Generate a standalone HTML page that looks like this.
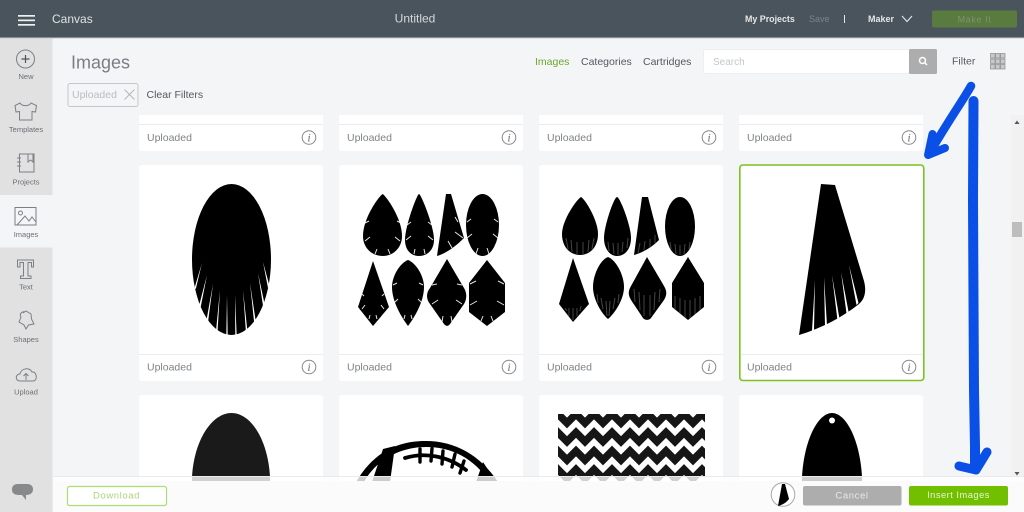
<!DOCTYPE html>
<html><head><meta charset="utf-8">
<style>
html,body{margin:0;padding:0;width:1024px;height:512px;overflow:hidden;background:#f4f5f7}
svg{display:block}
text{font-family:"Liberation Sans",sans-serif}
.s{font-family:"Liberation Serif",serif}
</style></head>
<body>
<svg width="1024" height="512" viewBox="0 0 1024 512" xmlns="http://www.w3.org/2000/svg">
<defs>
<clipPath id="chev"><rect x="558" y="414" width="147" height="68"/></clipPath>
<polyline id="zig" fill="none" stroke="#161616" stroke-width="7.6" points="540,414 549,423 558,414 567,423 576,414 585,423 594,414 603,423 612,414 621,423 630,414 639,423 648,414 657,423 666,414 675,423 684,414 693,423 702,414 711,423"/>
</defs>
<rect width="1024" height="512" fill="#f4f5f7"/>

<!-- cards -->
<g fill="#fff">
<rect x="139" y="110" width="184" height="41" rx="3"/><rect x="339" y="110" width="184" height="41" rx="3"/><rect x="539" y="110" width="184" height="41" rx="3"/><rect x="739" y="110" width="184" height="41" rx="3"/>
<rect x="139" y="165" width="184" height="216" rx="3"/><rect x="339" y="165" width="184" height="216" rx="3"/><rect x="539" y="165" width="184" height="216" rx="3"/>
<rect x="139" y="395" width="184" height="90" rx="3"/><rect x="339" y="395" width="184" height="90" rx="3"/><rect x="539" y="395" width="184" height="90" rx="3"/><rect x="739" y="395" width="184" height="90" rx="3"/>
</g>
<rect x="739.8" y="165" width="184" height="215.5" rx="3" fill="#fff" stroke="#7cc220" stroke-width="1.6"/>
<g fill="#ececec">
<rect x="139" y="124" width="184" height="1"/><rect x="339" y="124" width="184" height="1"/><rect x="539" y="124" width="184" height="1"/><rect x="739" y="124" width="184" height="1"/>
<rect x="139" y="354" width="184" height="1"/><rect x="339" y="354" width="184" height="1"/><rect x="539" y="354" width="184" height="1"/><rect x="741" y="354" width="182" height="1"/>
</g>
<g font-size="10.500" fill="#7f8386">
<text x="147" y="141">Uploaded</text><text x="347" y="141">Uploaded</text><text x="547" y="141">Uploaded</text><text x="747" y="141">Uploaded</text>
<text x="147" y="370.500">Uploaded</text><text x="347" y="370.500">Uploaded</text><text x="547" y="370.500">Uploaded</text><text x="747" y="370.500">Uploaded</text>
</g>
<g fill="none" stroke="#85878a" stroke-width="1">
<circle cx="309" cy="137.500" r="6.800"/><circle cx="509" cy="137.500" r="6.800"/><circle cx="709" cy="137.500" r="6.800"/><circle cx="909" cy="137.500" r="6.800"/>
<circle cx="309" cy="367" r="6.800"/><circle cx="509" cy="367" r="6.800"/><circle cx="709" cy="367" r="6.800"/><circle cx="909" cy="367" r="6.800"/>
</g>
<g font-size="12" fill="#6f7275" font-style="italic" text-anchor="middle">
<text class="s" x="309" y="141.500">i</text><text class="s" x="509" y="141.500">i</text><text class="s" x="709" y="141.500">i</text><text class="s" x="909" y="141.500">i</text>
<text class="s" x="309" y="371">i</text><text class="s" x="509" y="371">i</text><text class="s" x="709" y="371">i</text><text class="s" x="909" y="371">i</text>
</g>

<!-- Card 1 oval -->
<ellipse cx="231.500" cy="259.500" rx="39.500" ry="75.500" fill="#000"/>
<g fill="#fff">
<path d="M202 263L194.500 288L195.800 289Z"/><path d="M207 275L199 306L200.500 308Z"/><path d="M213 284L206.500 320L208 322Z"/><path d="M220 290L216 331L217.500 332Z"/><path d="M227 295L226.300 336L227.700 336Z"/><path d="M235 295L235.300 336L236.700 336Z"/><path d="M243 290L246 333L247.500 332Z"/><path d="M250 283L254.500 326L256 323Z"/><path d="M258 273L263.500 309L265 306Z"/><path d="M263 262L268 288L269.500 286Z"/>
</g>

<!-- Card 2 shapes -->
<g fill="#000">
<path d="M382.700 194C386 196 402 218 402 236C402 248 393 256 382.700 256C372 256 363 248 363 236C363 218 379 196 382.700 194Z"/>
<path d="M419 194C421 194 434 226 434 240C434 250 427 256 419 256C411 256 405 250 405 240C405 226 417 194 419 194Z"/>
<path d="M446 194H451L464 238C456 246 447 253 437 256Z"/>
<ellipse cx="482.500" cy="225" rx="16.500" ry="31"/>
<path d="M373 261L389 307L373 326L358 307Z"/>
<path d="M408 260C416 263 424 276 424 287C424 302 414 318 408 326C402 318 392 302 392 287C392 276 400 263 408 260Z"/>
<path d="M447 259L464 288C467 293 467 299 464 304L450 324C448 326.500 446 326.500 444 324L430 304C426 299 426 293 430 288Z"/>
<path d="M487 260L505 283V312L487 326L469 312V283Z"/>
</g>
<g stroke="#fff" stroke-width="1" fill="none" opacity=".9">
<path d="M365 223L369 221M401 223L397 221M365 241L370 237M400 241L395 237M375 254L377 249M390 254L388 249"/>
<path d="M407 225L411 222M432 225L428 222M406 240L411 236M433 240L428 236M414 254L415 249M425 254L424 249"/>
<path d="M455 217L458 222M455 232L463 238M448 241L452 248"/>
<path d="M467 222L471 219M498 222L494 219M467 238L472 234M498 238L493 234M476 254L478 248M489 254L487 248"/>
<path d="M362 294L364 296M384 294L382 296M362 309L365 305M384 309L381 305M369 319L370 315M377 319L376 315"/>
<path d="M393 285L397 283M423 285L419 283M394 303L398 299M422 303L418 299M404 319L405 315M412 319L411 315"/>
<path d="M432 285L437 284M462 285L457 284M432 304L438 300M462 304L456 300M442 322L443 316M452 322L451 316"/>
<path d="M470 284L476 281M504 284L498 281M470 305L477 301M504 305L497 301M481 321L483 316M493 321L491 316"/>
</g>

<!-- Card 3 shapes -->
<g fill="#000">
<path d="M581 197C585 199 598 220 598 234C598 247 590 255 580 255C570 255 562 247 562 234C562 220 577 199 581 197Z"/>
<path d="M617 197C620 197 631 226 631 238C631 249 625 256 617 256C610 256 604 249 604 238C604 226 614 197 617 197Z"/>
<path d="M642 197H648L659 240C652 247 644 252 634 255Z"/>
<ellipse cx="680" cy="226.500" rx="15" ry="29.500"/>
<path d="M573 258L589 304L573 322L559 304Z"/>
<path d="M608 257C616 260 624 275 624 287C624 300 614 314 608 319C602 314 593 300 593 287C593 275 600 260 608 257Z"/>
<path d="M647 257L664 286C667 291 667 295 664 300L651 318C649 320.500 645 320.500 643 318L631 300C628 295 628 291 631 286Z"/>
<path d="M688 257L704 283V307L688 320L672 307V283Z"/>
</g>
<g stroke="#8a8a8a" stroke-width="1" fill="none" opacity=".5">
<path d="M566 238L568 249M571 240L572 252M577 242L577 254M583 242L583 254M589 240L588 252M594 238L592 249"/>
<path d="M608 242L609 251M613 243L614 254M618 243L618 255M623 242L622 252M628 238L627 248"/>
<path d="M640 243L638 253M645 241L644 250M650 239L650 248M655 235L655 243"/>
<path d="M670 242L671 249M675 244L676 254M680 245L680 255M685 244L684 254M690 242L689 249"/>
<path d="M565 308L567 311M569 308L569 316M573 308L573 320M577 308L577 316M581 306L580 311"/>
<path d="M597 294L598 303M601 298L603 309M606 301L607 316M610 301L609 316M615 298L613 309M619 294L618 303"/>
<path d="M634 289L635 302M639 292L640 310M644 295L644 316M650 295L650 316M655 292L654 310M660 289L659 302"/>
<path d="M675 296V310M680 298V314M685 300V318M690 300V318M695 298V314M700 296V310"/>
</g>

<!-- Card 4 selected shape -->
<path d="M821 184L835 185L864 281C866 289 866 298 859 304C841 318 822 328 799 335Z" fill="#000"/>
<g fill="#fff">
<path d="M815 280L812 331L814 330Z"/><path d="M824 277L825 326.500L827 325.500Z"/><path d="M832 275L837.500 320.500L839.500 319Z"/><path d="M841 272L846.500 313.500L848.500 311.500Z"/><path d="M849 265L856.500 305L858.500 303Z"/>
</g>

<!-- Row 3 -->
<path d="M192 482V477C194 440 212 413 231.500 413C251 413 268 440 270 477V482Z" fill="#1a1a1a"/>
<path d="M356 482C375 450 400 441 426 441C455 441 480 455 498 482Z" fill="#000"/>
<path d="M364 482C376 460 400 447 426 447C452 447 473 458 490 482Z" fill="#fff"/>
<path d="M383 449L372 482H390L395 446Z" fill="#000"/>
<path d="M483 462L476 482H496Z" fill="#000"/>
<g fill="none" stroke="#000" stroke-linecap="round">
<path d="M405 458C425 452 448 456 466 470" stroke-width="3.800"/>
<path d="M420 449L420 462M432 448.500L431 461M443 451L442 464M455 454L452 467M464 461L460 473" stroke-width="3.400"/>
</g>
<g clip-path="url(#chev)">
<use href="#zig"/><use href="#zig" y="18.500"/><use href="#zig" y="37"/><use href="#zig" y="55.500"/>
</g>
<path d="M802 482V477C804 440 818 413 832 413C846 413 860 440 862 477V482Z" fill="#000"/>
<circle cx="832" cy="420.500" r="3" fill="#fff"/>

<!-- Cover above clipped cards -->
<rect x="53" y="38" width="958" height="77" fill="#f4f5f7"/>

<!-- scrollbar -->
<rect x="1011" y="115" width="13" height="361" fill="#f1f1f1"/>
<rect x="1012" y="222" width="10" height="15" fill="#bdbdbd"/>
<path d="M1014.500 124L1017 120.500L1019.500 124Z" fill="#555"/>
<path d="M1014.500 472L1017 475.500L1019.500 472Z" fill="#555"/>

<!-- Sidebar -->
<rect x="0" y="38" width="52.500" height="474" fill="#e1e1e2"/>
<rect x="0" y="195" width="52.500" height="52.500" fill="#f4f5f7"/>
<g fill="none" stroke="#7b8085" stroke-width="1">
<circle cx="25.500" cy="59" r="9"/>
<path d="M25.500 55V63M21.500 59H29.500" stroke="#50555a" stroke-width="1.200"/>
<path d="M20 103L15 105.500L16 112L19.500 111.500V120H32V111.500L35.500 112L36.500 105.500L31 103C29 106.500 22 106.500 20 103Z"/>
<path d="M19.500 154H34V172H19.500V154ZM21 158H17M21 162H17M21 166H17M28 154V162L30.500 160L33 162V154"/>
<rect x="15" y="207.500" width="21" height="17.500"/>
<circle cx="20.500" cy="213" r="2"/>
<path d="M17 225L25 216L29 221L32 217L36 222"/>
<path d="M17.500 260H33.500V267H31.500V262.500H28V276H31V278.500H20.500V276H23.500V262.500H20V267H17.500Z"/>
<path d="M23 313L26 311L31 314L31.500 319L34 324L28.500 325L26 329L24 325L19 322L21 317C19 314 22 311 25 312"/>
<path d="M20 381C15 381 15 374 20 374C21 368 30 367 32 372C37 371 38 381 33 381Z"/>
<path d="M26 380V374M23.500 376L26 373.500L28.500 376"/>
</g>
<path d="M18 484C13 484 12 487 12 489.500C12 493 14 495 19 495H22L26 500V495C30 495 33 493 33 489.500C33 486 31 484 27 484Z" fill="#88898b"/>
<g font-size="7.500" fill="#6a6f73" text-anchor="middle">
<text x="26" y="79">New</text><text x="26" y="132">Templates</text><text x="26" y="184.500">Projects</text><text x="26" y="237">Images</text><text x="26" y="289.500">Text</text><text x="26" y="342">Shapes</text><text x="26" y="394.500">Upload</text>
</g>

<!-- Header -->
<rect x="0" y="0" width="1024" height="37.500" fill="#4a545c"/>
<rect x="0" y="37.500" width="1024" height="1" fill="#c5cbce"/>
<g fill="#eef0f1"><rect x="18" y="15" width="17" height="1.700"/><rect x="18" y="19.500" width="17" height="1.700"/><rect x="18" y="24" width="17" height="1.700"/></g>
<text x="52" y="23" font-size="12" fill="#dfe3e5">Canvas</text>
<text x="415" y="22.500" font-size="12" fill="#d5d9dc" text-anchor="middle">Untitled</text>
<text x="745" y="22" font-size="8.900" font-weight="bold" fill="#e4e7e9">My Projects</text>
<text x="809" y="22" font-size="9" fill="#7a8389">Save</text>
<rect x="844" y="15" width="1" height="8" fill="#e4e7e9"/>
<text x="868" y="22" font-size="9" font-weight="bold" fill="#e4e7e9">Maker</text>
<path d="M902 16L907 21.500L912 16" fill="none" stroke="#dfe3e5" stroke-width="1.200"/>
<rect x="932" y="10.500" width="85" height="17" rx="2" fill="#5a7b3f"/>
<text x="974.500" y="22.500" font-size="9" fill="#7f9270" text-anchor="middle" letter-spacing=".6">Make It</text>

<!-- Toolbar -->
<text x="71" y="68.500" font-size="18" fill="#7a7e82">Images</text>
<text x="535" y="65" font-size="10.500" fill="#6ca82c">Images</text>
<text x="581" y="65" font-size="10.500" fill="#54595d">Categories</text>
<text x="643" y="65" font-size="10.500" fill="#54595d">Cartridges</text>
<rect x="703.500" y="49.500" width="206" height="24" rx="2" fill="#fff" stroke="#eceeef"/>
<rect x="909" y="49" width="28" height="25" rx="1.500" fill="#adadad"/>
<circle cx="922.500" cy="60.500" r="3" fill="none" stroke="#fff" stroke-width="1.500"/>
<path d="M924.700 62.700L927 65" stroke="#fff" stroke-width="1.500"/>
<text x="713" y="65" font-size="10" fill="#c3c6c8">Search</text>
<text x="952" y="64.500" font-size="10.500" fill="#55595d">Filter</text>
<g fill="#c9c9c9" stroke="#8d8d8d" stroke-width=".7">
<rect x="990.500" y="53.500" width="4.500" height="4.500"/><rect x="995.500" y="53.500" width="4.500" height="4.500"/><rect x="1000.500" y="53.500" width="4.500" height="4.500"/>
<rect x="990.500" y="59" width="4.500" height="4.500"/><rect x="995.500" y="59" width="4.500" height="4.500"/><rect x="1000.500" y="59" width="4.500" height="4.500"/>
<rect x="990.500" y="64.500" width="4.500" height="4.500"/><rect x="995.500" y="64.500" width="4.500" height="4.500"/><rect x="1000.500" y="64.500" width="4.500" height="4.500"/>
</g>
<rect x="68" y="83.500" width="70" height="23" rx="2" fill="#f4f5f7" stroke="#c3c7ca"/>
<text x="72" y="98" font-size="10.500" fill="#b9bdc0">Uploaded</text>
<path d="M124.500 89.500L134.500 99.500M134.500 89.500L124.500 99.500" stroke="#b5b8bb" stroke-width="1"/>
<text x="146.500" y="98" font-size="10.500" fill="#55595d">Clear Filters</text>

<!-- Bottom bar -->
<rect x="53" y="476.500" width="971" height="5" fill="#fff" opacity=".8"/>
<rect x="53" y="481" width="971" height="31" fill="#fbfbfb"/>
<rect x="53" y="476" width="971" height="1" fill="#eaeaea"/>
<rect x="67.500" y="486.500" width="99" height="19" rx="2" fill="#fff" stroke="#acdc72" stroke-width="1.200"/>
<text x="116.500" y="498.500" font-size="9.500" fill="#a9d67a" text-anchor="middle" letter-spacing=".6">Download</text>
<circle cx="783" cy="494.500" r="11.800" fill="#fff" stroke="#a8a8a8" stroke-width="1"/>
<path d="M782 484H785L789 499C786 503 782 505 778 506Z" fill="#000"/>
<rect x="803" y="486" width="98.500" height="19.500" rx="2" fill="#adadad"/>
<text x="852" y="498.500" font-size="9.500" fill="#e9e9e9" text-anchor="middle" letter-spacing=".6">Cancel</text>
<rect x="909" y="486" width="99" height="19.500" rx="2" fill="#72bf00"/>
<text x="958.500" y="498" font-size="9.300" fill="#e6f4d2" text-anchor="middle" letter-spacing=".5">Insert Images</text>

<!-- Blue arrows -->
<g fill="none" stroke="#0a50e6" stroke-linecap="round" stroke-linejoin="round">
<path d="M973.500 101L973 200L973.500 300L974 390L975 447L975 468" stroke-width="10"/>
<path d="M987 452L976 470L959 466" stroke-width="9"/>
<path d="M971 86C962 102 950 118 929 154" stroke-width="8.500"/>
<path d="M932.500 134L928 155L945 148" stroke-width="8"/>
</g>
</svg>
</body></html>
